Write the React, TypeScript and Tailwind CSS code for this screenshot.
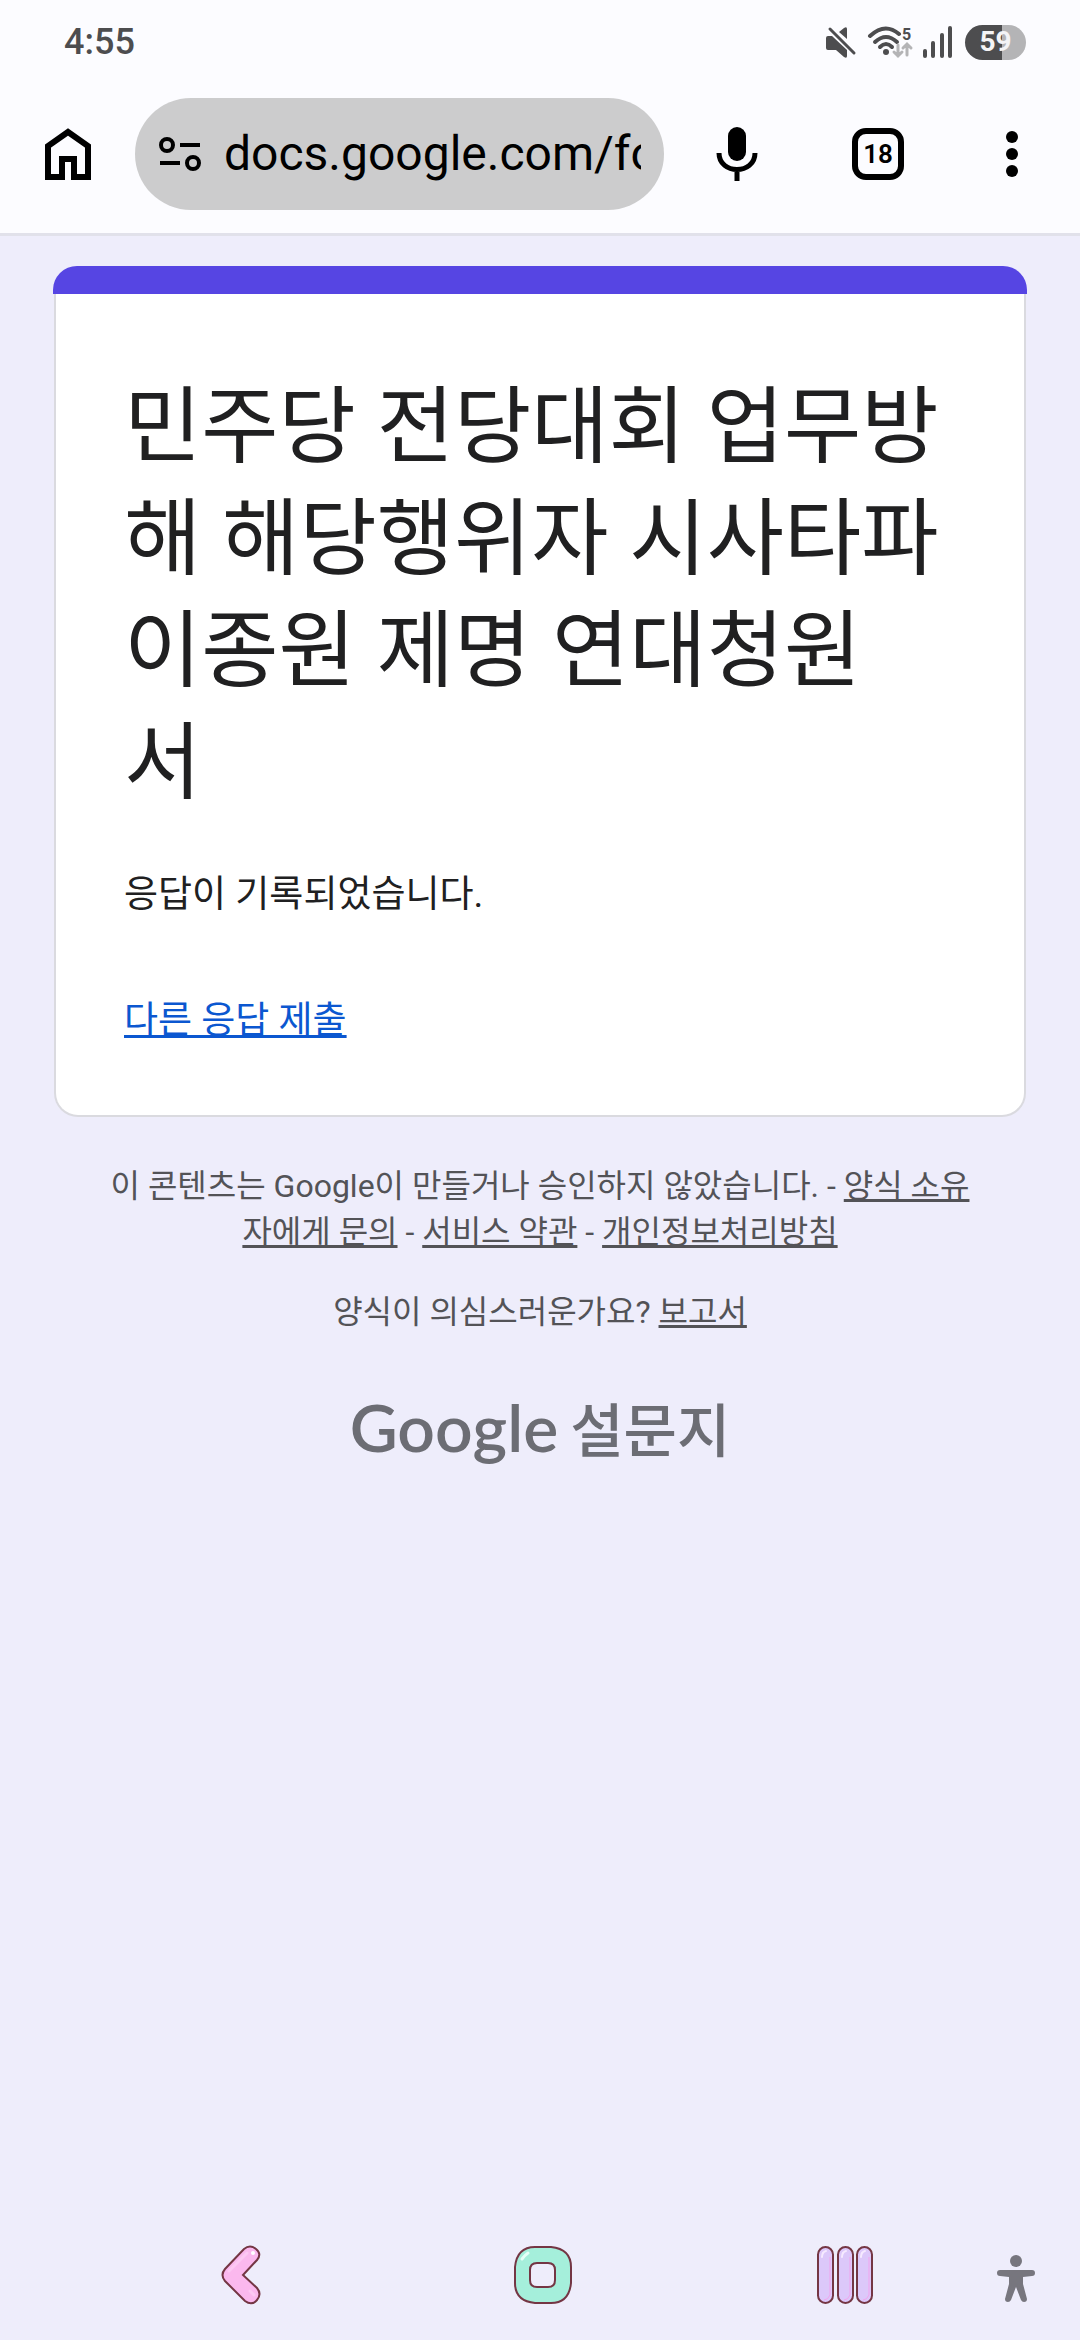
const StatusBar = () => {
  return (
    <div className="flex h-[84px] items-center pl-16 pr-[54px] text-[#4d4d4f]">
      <span className="text-4xl font-medium">4:55</span>
      <div className="ml-auto flex items-center">
        {/* muted speaker */}
        <svg width="32" height="34" viewBox="0 0 32 34" fill="currentColor">
          <path d="M1 13q0-2 2-2h4l15 14v6q0 3-3 1l-8-7H3q-2 0-2-2zM14 7l5-4q3-2 3 1v10z" />
          <path
            d="M5 4l24 24"
            stroke="currentColor"
            strokeWidth="3"
            strokeLinecap="round"
          />
        </svg>
        {/* wifi with band and traffic arrows */}
        <svg
          className="ml-2.5"
          width="48"
          height="34"
          viewBox="0 0 48 34"
          fill="none"
          strokeLinecap="round"
        >
          <g stroke="currentColor" strokeWidth="4">
            <path d="M3 11q15-14 29-2" />
            <path d="M8 17q11-10 22 0" />
            <path d="M13 22q6-6 12 0" />
          </g>
          <circle cx="19" cy="27" r="3" fill="currentColor" />
          <path
            d="M31 20v11m-4-4l4 4 4-4M40 30V19m-4 4l4-4 4 4"
            stroke="#b4b4b6"
            strokeWidth="3"
          />
          <text
            x="35"
            y="15"
            fontSize="16"
            fontWeight="700"
            fill="currentColor"
            fontFamily="Roboto"
          >
            5
          </text>
        </svg>
        {/* signal */}
        <svg
          className="ml-2"
          width="30"
          height="34"
          viewBox="0 0 30 34"
          fill="currentColor"
        >
          <rect x="0" y="24" width="4" height="9" rx="2" />
          <rect x="8" y="16" width="4" height="17" rx="2" />
          <rect x="17" y="8" width="4" height="25" rx="2" />
          <rect x="25" y="1" width="4" height="32" rx="2" />
        </svg>
        <div className="ml-3 flex h-[35px] w-[61px] items-center justify-center rounded-full bg-linear-to-r from-[#4d4d4f] from-60% to-[#b4b4b6] to-60% text-[28px] font-bold text-[#f4f4f6]">
          59
        </div>
      </div>
    </div>
  );
};

const Toolbar = () => {
  return (
    <div className="flex h-[152px] items-center border-b-3 border-[#e1e1ea] pb-2.5 pl-11 text-black">
      <button aria-label="홈">
        <svg
          width="48"
          height="54"
          viewBox="0 0 48 54"
          fill="none"
          stroke="currentColor"
          strokeWidth="6"
        >
          <path d="M4 50V19L24 5l20 14v31H30V32H18v18z" />
        </svg>
      </button>
      <div className="ml-[43px] flex h-28 flex-1 items-center rounded-full bg-[#cccccd] pl-6 pr-[23px]">
        <button aria-label="사이트 정보">
          <svg
            width="44"
            height="38"
            viewBox="0 0 44 38"
            fill="none"
            stroke="currentColor"
            strokeWidth="4"
          >
            <circle cx="8" cy="10" r="6" />
            <path d="M21 10h20M1 28h20" />
            <circle cx="34" cy="28" r="6" />
          </svg>
        </button>
        <input
          aria-label="주소창"
          defaultValue="docs.google.com/forms"
          className="ml-[21px] w-full min-w-0 bg-transparent text-5xl leading-[64px] outline-none"
        />
      </div>
      <button aria-label="음성 검색" className="ml-[51px]">
        <svg width="44" height="56" viewBox="0 0 44 56">
          <rect x="13" y="1" width="18" height="34" rx="9" />
          <path
            d="M4 27c0 22 36 22 36 0M22 43v12"
            fill="none"
            stroke="currentColor"
            strokeWidth="5"
          />
        </svg>
      </button>
      <button
        aria-label="탭 18개"
        className="ml-[93px] flex size-[52px] items-center justify-center rounded-[14px] border-[6px] border-black text-[26px] leading-none font-semibold"
      >
        18
      </button>
      <button aria-label="메뉴" className="ml-[100px] mr-[60px]">
        <svg width="16" height="50" viewBox="0 0 16 50">
          <circle cx="8" cy="8" r="6" />
          <circle cx="8" cy="25" r="6" />
          <circle cx="8" cy="42" r="6" />
        </svg>
      </button>
    </div>
  );
};

const FormCard = () => {
  return (
    <section>
      <div className="h-7 rounded-t-3xl bg-[#5645e3]" />
      <div className="mx-px rounded-b-3xl border-2 border-t-0 border-[#dadadf] bg-white px-[68px] pt-[78px] pb-[68px] text-[#202021]">
        <h1 className="text-[84px] leading-[112px]">
          민주당 전당대회 업무방해 해당행위자 시사타파 이종원 제명 연대청원
          <br />서
        </h1>
        <p className="mt-12 text-[37px] leading-[53px]">
          응답이 기록되었습니다.
        </p>
        <p className="mt-[73px] text-[37px] leading-[53px]">
          <a href="#" className="text-[#0b57d0] underline">
            다른 응답 제출
          </a>
        </p>
      </div>
    </section>
  );
};

const FormFooter = () => {
  return (
    <footer className="px-12 text-center text-[32px] leading-[46px] text-[#535357]">
      <p className="mt-[46px]">
        이 콘텐츠는 Google이 만들거나 승인하지 않았습니다. -{" "}
        <a href="#" className="underline">
          양식 소유자에게 문의
        </a>{" "}
        -{" "}
        <a href="#" className="underline">
          서비스 약관
        </a>{" "}
        -{" "}
        <a href="#" className="underline">
          개인정보처리방침
        </a>
      </p>
      <p className="mt-[34px]">
        양식이 의심스러운가요?{" "}
        <a href="#" className="underline">
          보고서
        </a>
      </p>
      <a
        href="#"
        className="mt-14 flex items-baseline justify-center gap-3 leading-[72px] text-[#6c6d74]"
      >
        <span className="font-['Lato'] text-[66px] font-semibold">Google</span>
        <span className="text-[58px] font-medium">설문지</span>
      </a>
    </footer>
  );
};

const NavBar = () => {
  return (
    <nav className="mt-auto flex h-[130px] items-center pl-[90px] pr-[44px]">
      <button aria-label="뒤로" className="flex flex-1 justify-center">
        <svg width="40" height="60" viewBox="0 0 40 60">
          <path
            d="M23 4Q29-1 35 4T36 15L22 30 36 43Q41 49 36 55T24 56L4 36Q-1 30 4 24z"
            fill="#fbb8ee"
            stroke="#743644"
            strokeWidth="2"
          />
          <path
            d="M26 8L8 26M29 46l4 4"
            fill="none"
            stroke="#fdc8f3"
            strokeWidth="3"
            strokeLinecap="round"
          />
          <circle cx="32" cy="8" r="2" fill="#fff" />
        </svg>
      </button>
      <button aria-label="홈 화면" className="flex flex-1 justify-center">
        <svg width="60" height="60" viewBox="0 0 60 60">
          <path
            fillRule="evenodd"
            d="M22 2h16q20 2 20 20v16q-2 20-20 20H22Q2 56 2 38V22Q4 2 22 2zM24 18q-7 0-7 7v10q0 7 7 7h11q7 0 7-7V25q0-7-7-7z"
            fill="#a5efdb"
            stroke="#743644"
            strokeWidth="2"
          />
          <path
            d="M9 14q3-4 6-6"
            fill="none"
            stroke="#e6fff8"
            strokeWidth="3"
            strokeLinecap="round"
          />
        </svg>
      </button>
      <button aria-label="최근 앱" className="flex flex-1 justify-center">
        <svg
          width="60"
          height="60"
          viewBox="0 0 60 60"
          fill="#dcc8fa"
          stroke="#743644"
          strokeWidth="2"
        >
          <rect x="3" y="2" width="15" height="56" rx="7.5" />
          <rect x="23" y="2" width="15" height="56" rx="7.5" />
          <rect x="42" y="2" width="15" height="56" rx="7.5" />
          <path
            d="M7 12q0-5 4-6M27 12q0-5 4-6M46 12q0-5 4-6"
            fill="none"
            stroke="#f6eaff"
            strokeLinecap="round"
          />
          <path
            d="M15 12v38q-2 5-6 5M35 12v38q-2 5-6 5M54 12v38q-2 5-6 5"
            fill="none"
            stroke="#f2a4ee"
            strokeWidth="1"
          />
        </svg>
      </button>
      <button aria-label="접근성" className="pt-1.5">
        <svg width="40" height="50" viewBox="0 0 40 50" fill="#77767e">
          <circle cx="20" cy="8" r="6" />
          <path d="M4 17h32q3 0 3 3t-3 3l-9 1v7l4 15q0 3-3 3-2 0-3-2l-5-13-5 13q-1 2-3 2-3 0-3-3l4-15v-7l-9-1q-3 0-3-3t3-3z" />
        </svg>
      </button>
    </nav>
  );
};

const App = () => {
  return (
    <div className="flex min-h-screen flex-col bg-[#eeedfb] font-['Roboto','Noto_Sans_CJK_KR',sans-serif]">
      <header className="bg-[#fcfcff]">
        <StatusBar />
        <Toolbar />
      </header>
      <main className="px-[53px] pt-[30px]">
        <FormCard />
        <FormFooter />
      </main>
      <NavBar />
    </div>
  );
};

export default App;
